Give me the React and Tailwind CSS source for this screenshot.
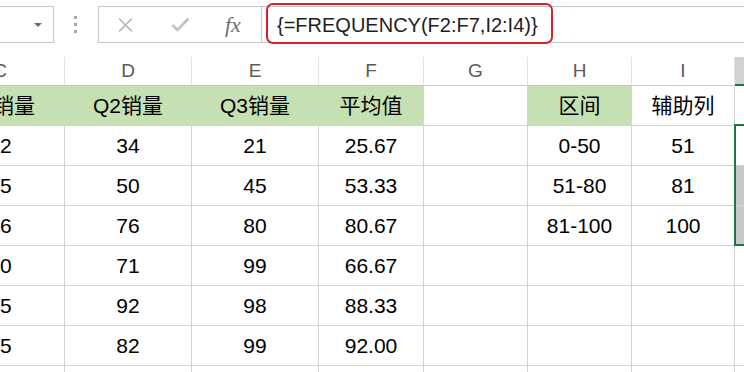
import React from "react";

const cols = [
  { key: "C", w: "w-[129px]" },
  { key: "D", w: "w-[127px]" },
  { key: "E", w: "w-[127px]" },
  { key: "F", w: "w-[105px]" },
  { key: "G", w: "w-[104px]" },
  { key: "H", w: "w-[104px]" },
  { key: "I", w: "w-[103px]" },
  { key: "J", w: "w-[80px]" },
];

const rows = [
  ["Q1销量", "Q2销量", "Q3销量", "平均值", "", "区间", "辅助列", ""],
  ["22", "34", "21", "25.67", "", "0-50", "51", ""],
  ["65", "50", "45", "53.33", "", "51-80", "81", ""],
  ["86", "76", "80", "80.67", "", "81-100", "100", ""],
  ["30", "71", "99", "66.67", "", "", "", ""],
  ["75", "92", "98", "88.33", "", "", "", ""],
  ["95", "82", "99", "92.00", "", "", "", ""],
  ["", "", "", "", "", "", "", ""],
  ["", "", "", "", "", "", "", ""],
];

const isGreen = (r, c) => r === 0 && (c <= 3 || c === 5);
const isShaded = (r, c) => c === 7 && (r === 2 || r === 3);

const App = () => {
  return (
    <div
      className="relative w-[744px] h-[372px] overflow-hidden bg-white"
      style={{ fontFamily: '"Liberation Sans", "Noto Sans CJK SC", sans-serif' }}
    >
      {/* toolbar */}
      <div className="flex items-start h-[57px]">
        <div className="mt-[6px] ml-[-1px] w-[55px] h-[37px] border border-[#c6c6c6] flex items-center justify-end pr-[11px]">
          <div className="w-0 h-0 border-l-[4px] border-r-[4px] border-t-[4px] border-l-transparent border-r-transparent border-t-[#6b6b6b]"></div>
        </div>
        <div className="ml-[20px] mt-[16px] flex flex-col gap-[4px]">
          <div className="w-[3px] h-[3px] bg-[#a8a8a8]"></div>
          <div className="w-[3px] h-[3px] bg-[#a8a8a8]"></div>
          <div className="w-[3px] h-[3px] bg-[#a8a8a8]"></div>
        </div>
        <div className="ml-[21px] mt-[6px] flex-1 h-[37px] border-y border-l border-[#c6c6c6] flex">
          <div className="w-[163px] h-full border-r border-[#c6c6c6] flex items-center pl-[18px]">
            <svg width="17" height="16" viewBox="0 0 17 16">
              <path d="M2 1.5 L15 14.5 M15 1.5 L2 14.5" stroke="#b4b4b4" strokeWidth="1.6" fill="none" />
            </svg>
            <svg className="ml-[37px]" width="19" height="15" viewBox="0 0 19 15">
              <path d="M1.5 8 L6.5 13 L17.5 1.5" stroke="#c2c2c2" strokeWidth="2.6" fill="none" />
            </svg>
            <span
              className="ml-[35px] text-[22px] italic text-[#6f6f6f] leading-none"
              style={{ fontFamily: '"Liberation Serif", serif' }}
            >
              fx
            </span>
          </div>
          <div className="flex-1 flex items-center pl-[15px] text-[20px] text-[#1e1e1e]">
            {"{=FREQUENCY(F2:F7,I2:I4)}"}
          </div>
        </div>
      </div>

      {/* red annotation */}
      <div className="absolute left-[266px] top-[3px] w-[287px] h-[41px] border-2 border-[#d6232b] rounded-[7px]"></div>

      {/* grid */}
      <div className="flex flex-col ml-[-64px]">
        <div className="flex">
          {cols.map((col, c) => (
            <div
              key={col.key}
              className={`${col.w} shrink-0 h-[29px] flex items-center justify-center text-[19px] text-[#5a5a5a] ${
                col.key === "J"
                  ? "bg-[#d2d2d2] border-b-2 border-b-[#217346]"
                  : "border-r border-r-[#e2e2e2] border-b border-b-[#c8c8c8]"
              }`}
            >
              {col.key === "J" ? "" : col.key}
            </div>
          ))}
        </div>
        {rows.map((row, r) => (
          <div key={r} className="flex">
            {row.map((val, c) => (
              <div
                key={c}
                className={`${cols[c].w} shrink-0 h-[40px] flex items-center justify-center text-[21px] text-black border-b border-b-[#d4d4d4] border-r ${
                  isGreen(r, c) && isGreen(r, c + 1)
                    ? "border-r-[#c6e0b4]"
                    : "border-r-[#d4d4d4]"
                } ${isGreen(r, c) ? "bg-[#c6e0b4]" : ""} ${
                  isShaded(r, c) ? "bg-[#c8c8c8]" : ""
                }`}
              >
                {val}
              </div>
            ))}
          </div>
        ))}
      </div>

      {/* selection J2:J4 */}
      <div className="absolute left-[734px] top-[124px] w-[30px] h-[122px] border-2 border-[#217346]"></div>
    </div>
  );
};

export default App;
